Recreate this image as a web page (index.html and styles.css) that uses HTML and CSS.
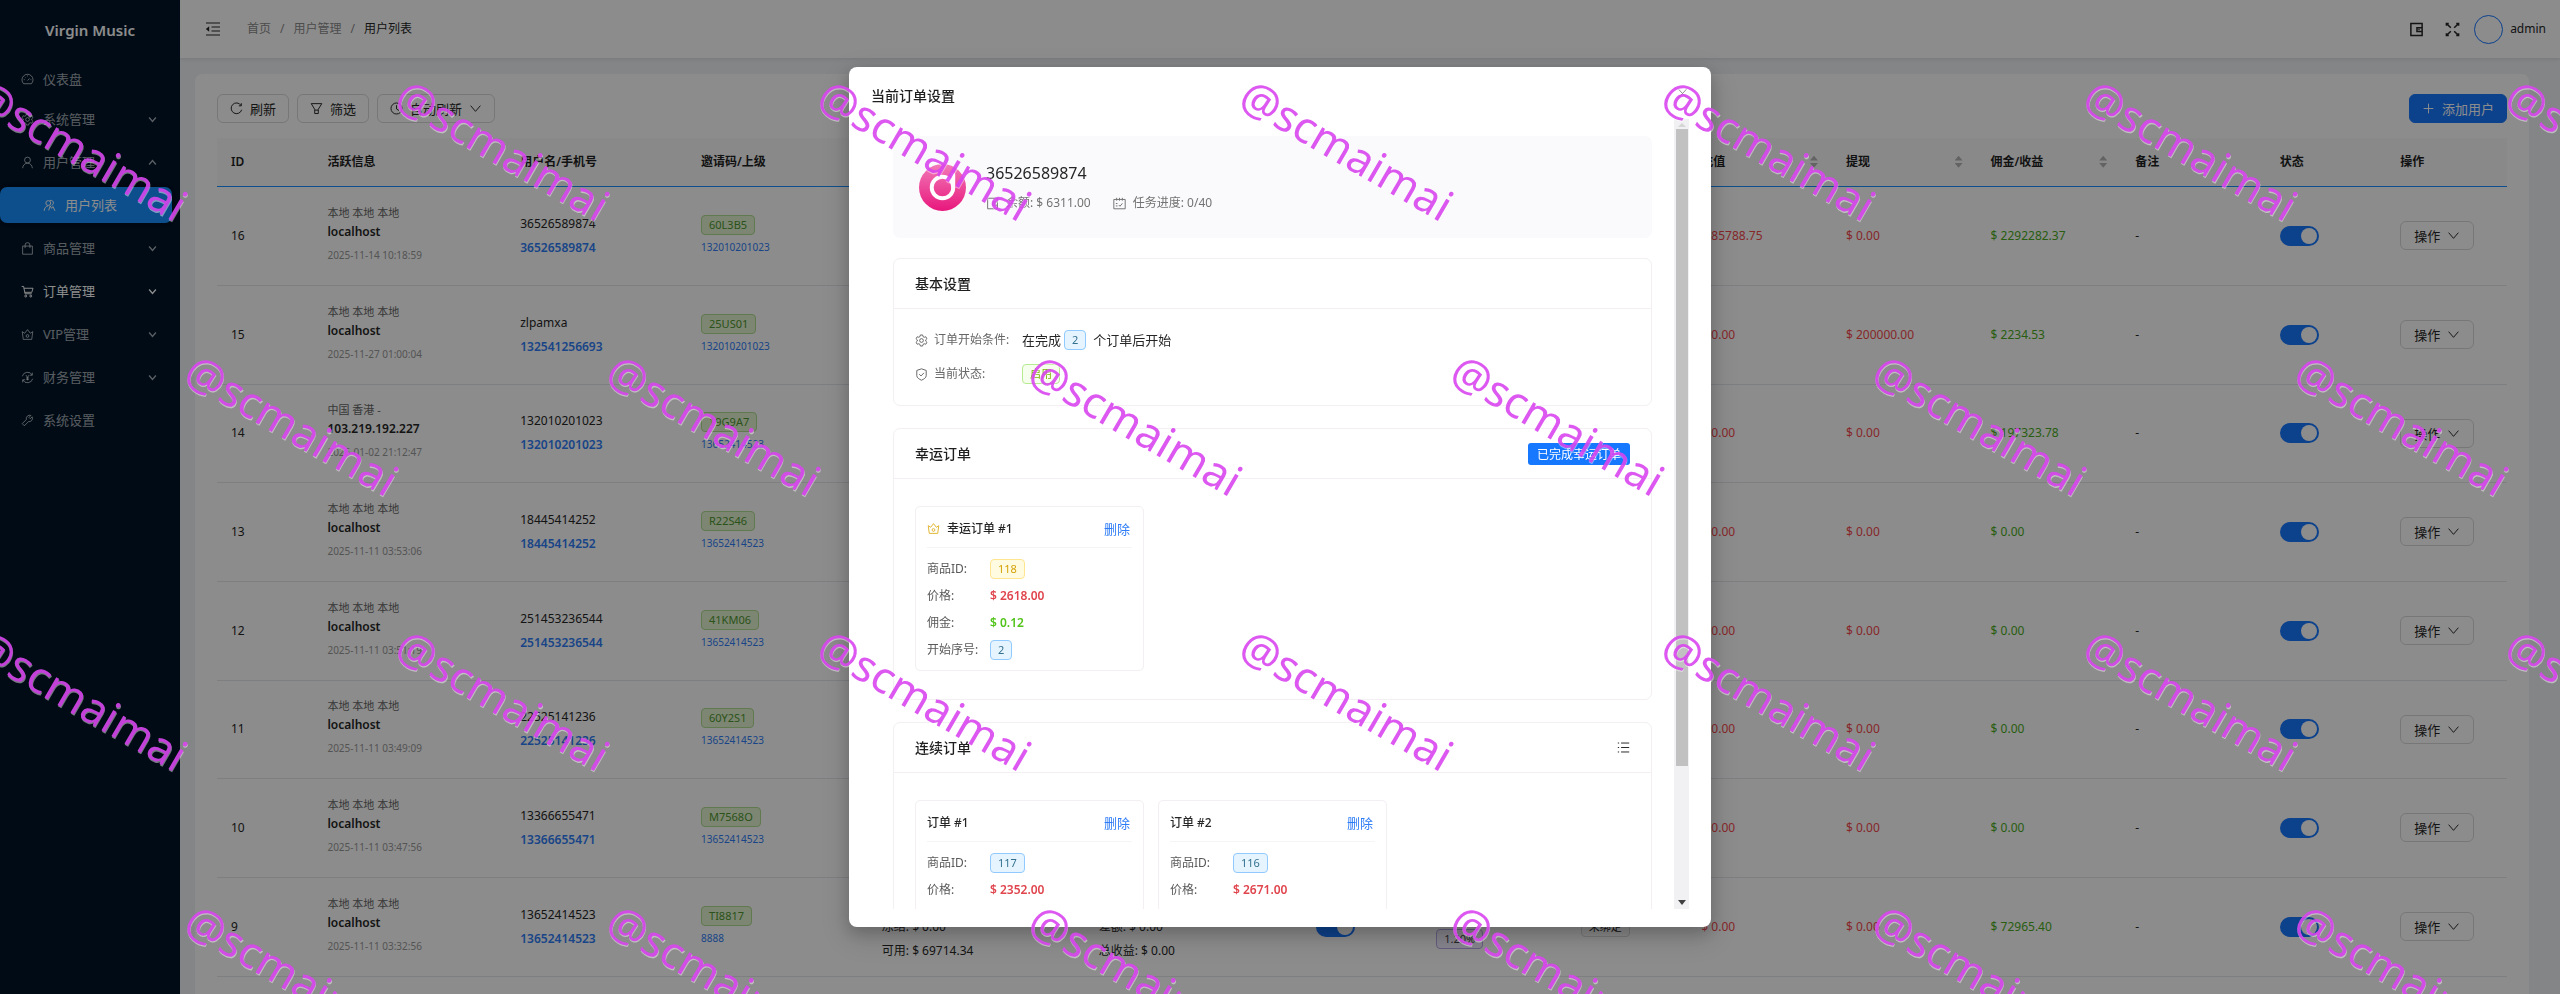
FILE: index.html
```html
<!DOCTYPE html>
<html lang="zh-CN">
<head>
  <meta charset="UTF-8">
  <meta name="viewport" content="width=device-width, initial-scale=1.0">
  <title>用户列表 | Virgin Music</title>
  <link rel="stylesheet" href="styles.css">
</head>
<body>

  <!-- shared icons -->
  <svg class="sprite" aria-hidden="true">
    <symbol id="i-dash" viewBox="0 0 16 16"><path d="M3.2 13.2a6.8 6.8 0 1 1 9.6 0zM8 9.2l2.6-2.6M8 3v1.2M3.4 8.2h1.2M11.6 8.2h1.2M4.8 5l.8.8"/></symbol>
    <symbol id="i-gear" viewBox="0 0 16 16"><path d="M6.6 1.2h2.8l.5 2 1.4.8 2-.6 1.4 2.4-1.5 1.4v1.6l1.5 1.4-1.4 2.4-2-.6-1.4.8-.5 2H6.6l-.5-2-1.4-.8-2 .6-1.4-2.4 1.5-1.4V7.2L1.3 5.800l1.400-2.400 2 .6 1.400-.8z"/><circle cx="8" cy="8" r="2.300"/></symbol>
    <symbol id="i-user" viewBox="0 0 16 16"><circle cx="8" cy="5" r="3.600"/><path d="M2 15c.3-3.600 2.800-6.200 6-6.200s5.700 2.600 6 6.200"/></symbol>
    <symbol id="i-users" viewBox="0 0 16 16"><circle cx="6.500" cy="5" r="3"/><path d="M1.500 14.500c.2-3.500 2-5.500 4.500-5.800M8.500 1.800c2.500-.6 4.500 1 4.300 3.200-.1 1.500-1 2.500-2.300 2.900M7 14l1.800-5.500 1.800 3 1.600-2.200 2.500 5.200"/></symbol>
    <symbol id="i-bag" viewBox="0 0 16 16"><path d="M2 5h12v10H2zM5 7.500V3.800a3 3 0 0 1 6 0v3.700"/></symbol>
    <symbol id="i-cart" viewBox="0 0 16 16"><path d="M.8 1.800h2.400l1.800 9h8.200M3.600 4h11.200l-1.500 5H4.600"/><circle cx="5.800" cy="13.600" r="1.200"/><circle cx="12" cy="13.600" r="1.200"/></symbol>
    <symbol id="i-crown" viewBox="0 0 16 16"><path d="M1.500 4.500l3 2L8 2l3.500 4.500 3-2-1.300 9.500H2.800z"/><circle cx="8" cy="9.800" r="1.700"/></symbol>
    <symbol id="i-money" viewBox="0 0 16 16"><path d="M1.600 6.500A6.600 6.600 0 0 1 13.800 5M14.400 9.500A6.600 6.600 0 0 1 2.200 11M13.900 2v3.200h-3M2.100 14v-3.200h3M6 5l2 2.800L10 5M8 7.800V11.500M6.200 8.500h3.600M6.200 10.200h3.600"/></symbol>
    <symbol id="i-tool" viewBox="0 0 16 16"><path d="M13.800 3.500l-2.400 2.300-1.600-1.600L12.200 1.800A4.200 4.200 0 0 0 6.600 6.800L1.500 11.900l2.600 2.600 5.100-5.100a4.200 4.200 0 0 0 4.600-5.900z"/></symbol>
    <symbol id="i-down" viewBox="0 0 16 16"><path d="M2 4.500l6 7 6-7"/></symbol>
    <symbol id="i-fold" viewBox="0 0 16 16"><path d="M1 2h14M6.500 6h8.500M6.500 10h8.500M1 14h14"/><path class="solid" d="M4.200 5.200v5.600L.8 8z"/></symbol>
    <symbol id="i-reload" viewBox="0 0 16 16"><path d="M13.600 4.200A6.600 6.600 0 1 0 14.400 9.500M13.900 1.500v3.200h-3"/></symbol>
    <symbol id="i-filter" viewBox="0 0 16 16"><path d="M1.500 2h13l-4.300 7v5.200H5.800V9zM5.800 10h4.400"/></symbol>
    <symbol id="i-clock" viewBox="0 0 16 16"><circle cx="8" cy="8" r="6.800"/><path d="M8 4v4.500l3 2"/></symbol>
    <symbol id="i-wallet" viewBox="0 0 16 16"><path d="M2 1.500h12v13H2zM14 6H8.500v4H14"/><path class="solid" d="M10 7.300h1.400v1.400H10z"/></symbol>
    <symbol id="i-full" viewBox="0 0 16 16"><path d="M1.500 1.500l4.700 4.700M14.500 1.500L9.800 6.200M1.500 14.500l4.700-4.700M14.500 14.500L9.800 9.800M1.500 4V1.500H4M14.500 4V1.500H12M1.500 12v2.500H4M14.500 12v2.500H12"/></symbol>
    <symbol id="i-plus" viewBox="0 0 16 16"><path d="M8 2v12M2 8h12"/></symbol>
    <symbol id="i-close" viewBox="0 0 16 16"><path d="M2.500 2l11 12M13.500 2l-11 12"/></symbol>
    <symbol id="i-task" viewBox="0 0 16 16"><path d="M1 3h14v11.500H1zM4.500 1v3.500M8 1v3.500M11.500 1v3.500M7 9.800l1.600 1.600 3-3.600M3.500 8h2M3.500 11h2"/></symbol>
    <symbol id="i-safe" viewBox="0 0 16 16"><path d="M8 1l5.800 2v6.500c0 2.500-3 4.300-5.800 5.500-2.800-1.200-5.800-3-5.800-5.500V3zM5.200 7.600l2.200 2.200 3.600-3.800"/></symbol>
    <symbol id="i-list" viewBox="0 0 16 16"><path d="M5 2.500h10M5 8h10M5 13.500h10M1 2.500h1.600M1 8h1.600M1 13.500h1.600"/></symbol>
  </svg>

  <div class="layout">
    <aside class="sider">
      <div class="logo">Virgin Music</div>
      <nav class="menu">
        <a href="#" class="menu-item home"><svg class="icon"><use href="#i-dash"/></svg><span>仪表盘</span></a>
        <a href="#" class="menu-item"><svg class="icon"><use href="#i-gear"/></svg><span>系统管理</span><svg class="arrow"><use href="#i-down"/></svg></a>
        <a href="#" class="menu-item open"><svg class="icon"><use href="#i-user"/></svg><span>用户管理</span><svg class="arrow"><use href="#i-down"/></svg></a>
        <a href="#" class="menu-item sub selected"><svg class="icon"><use href="#i-users"/></svg><span>用户列表</span></a>
        <a href="#" class="menu-item"><svg class="icon"><use href="#i-bag"/></svg><span>商品管理</span><svg class="arrow"><use href="#i-down"/></svg></a>
        <a href="#" class="menu-item hover"><svg class="icon"><use href="#i-cart"/></svg><span>订单管理</span><svg class="arrow"><use href="#i-down"/></svg></a>
        <a href="#" class="menu-item"><svg class="icon"><use href="#i-crown"/></svg><span>VIP管理</span><svg class="arrow"><use href="#i-down"/></svg></a>
        <a href="#" class="menu-item"><svg class="icon"><use href="#i-money"/></svg><span>财务管理</span><svg class="arrow"><use href="#i-down"/></svg></a>
        <a href="#" class="menu-item"><svg class="icon"><use href="#i-tool"/></svg><span>系统设置</span></a>
      </nav>
    </aside>

    <div class="main">
      <header class="header">
        <button type="button" class="icon-btn fold" aria-label="收起菜单"><svg class="icon"><use href="#i-fold"/></svg></button>
        <nav class="breadcrumb">
          <a href="#">首页</a><i>/</i><a href="#">用户管理</a><i>/</i><span>用户列表</span>
        </nav>
        <div class="header-right">
          <button type="button" class="icon-btn" aria-label="钱包"><svg class="icon"><use href="#i-wallet"/></svg></button>
          <button type="button" class="icon-btn" aria-label="全屏"><svg class="icon"><use href="#i-full"/></svg></button>
          <div class="account"><span class="avatar"></span><span>admin</span></div>
        </div>
      </header>

      <main class="card">
        <div class="toolbar">
          <button type="button" class="btn"><svg class="icon"><use href="#i-reload"/></svg>刷新</button>
          <button type="button" class="btn"><svg class="icon"><use href="#i-filter"/></svg>筛选</button>
          <button type="button" class="btn"><svg class="icon"><use href="#i-clock"/></svg>自动刷新<svg class="icon caret"><use href="#i-down"/></svg></button>
          <button type="button" class="btn primary"><svg class="icon"><use href="#i-plus"/></svg>添加用户</button>
        </div>

        <table class="table">
          <colgroup>
            <col class="w80"><col class="w160"><col class="w150"><col class="w150"><col class="w180"><col class="w180"><col class="w100"><col class="w120">
            <col class="w100"><col class="w120"><col class="w120"><col class="w120"><col class="w120"><col class="w100"><col class="w100">
          </colgroup>
          <thead>
            <tr>
              <th>ID</th><th>活跃信息</th><th>用户名/手机号</th><th>邀请码/上级</th><th></th><th></th><th></th><th></th><th></th>
              <th><div class="sort">充值</div></th><th><div class="sort">提现</div></th><th><div class="sort">佣金/收益</div></th><th>备注</th><th>状态</th><th>操作</th>
            </tr>
          </thead>
          <tbody>
            <tr>
              <td>16</td>
              <td><div class="place">本地 本地 本地</div><div class="host">localhost</div><div class="time">2025-11-14 10:18:59</div></td>
              <td><div class="name">36526589874</div><a href="#" class="phone">36526589874</a></td>
              <td><span class="tag green">60L3B5</span><a href="#" class="parent">132010201023</a></td>
              <td></td><td></td><td></td><td></td><td></td>
              <td class="red">$ 85788.75</td><td class="red">$ 0.00</td><td class="earn">$ 2292282.37</td><td>-</td>
              <td><input type="checkbox" class="switch" aria-label="状态" checked></td>
              <td><button type="button" class="btn">操作<svg class="icon caret"><use href="#i-down"/></svg></button></td>
            </tr>
            <tr>
              <td>15</td>
              <td><div class="place">本地 本地 本地</div><div class="host">localhost</div><div class="time">2025-11-27 01:00:04</div></td>
              <td><div class="name">zlpamxa</div><a href="#" class="phone">132541256693</a></td>
              <td><span class="tag green">25US01</span><a href="#" class="parent">132010201023</a></td>
              <td></td><td></td><td></td><td></td><td></td>
              <td class="red">$ 0.00</td><td class="red">$ 200000.00</td><td class="earn">$ 2234.53</td><td>-</td>
              <td><input type="checkbox" class="switch" aria-label="状态" checked></td>
              <td><button type="button" class="btn">操作<svg class="icon caret"><use href="#i-down"/></svg></button></td>
            </tr>
            <tr>
              <td>14</td>
              <td><div class="place">中国 香港 -</div><div class="host">103.219.192.227</div><div class="time">2026-01-02 21:12:47</div></td>
              <td><div class="name">132010201023</div><a href="#" class="phone">132010201023</a></td>
              <td><span class="tag green">19G9A7</span><a href="#" class="parent">13652414523</a></td>
              <td></td><td></td><td></td><td></td><td></td>
              <td class="red">$ 0.00</td><td class="red">$ 0.00</td><td class="earn">$ 197323.78</td><td>-</td>
              <td><input type="checkbox" class="switch" aria-label="状态" checked></td>
              <td><button type="button" class="btn">操作<svg class="icon caret"><use href="#i-down"/></svg></button></td>
            </tr>
            <tr>
              <td>13</td>
              <td><div class="place">本地 本地 本地</div><div class="host">localhost</div><div class="time">2025-11-11 03:53:06</div></td>
              <td><div class="name">18445414252</div><a href="#" class="phone">18445414252</a></td>
              <td><span class="tag green">R22S46</span><a href="#" class="parent">13652414523</a></td>
              <td></td><td></td><td></td><td></td><td></td>
              <td class="red">$ 0.00</td><td class="red">$ 0.00</td><td class="earn">$ 0.00</td><td>-</td>
              <td><input type="checkbox" class="switch" aria-label="状态" checked></td>
              <td><button type="button" class="btn">操作<svg class="icon caret"><use href="#i-down"/></svg></button></td>
            </tr>
            <tr>
              <td>12</td>
              <td><div class="place">本地 本地 本地</div><div class="host">localhost</div><div class="time">2025-11-11 03:51:19</div></td>
              <td><div class="name">251453236544</div><a href="#" class="phone">251453236544</a></td>
              <td><span class="tag green">41KM06</span><a href="#" class="parent">13652414523</a></td>
              <td></td><td></td><td></td><td></td><td></td>
              <td class="red">$ 0.00</td><td class="red">$ 0.00</td><td class="earn">$ 0.00</td><td>-</td>
              <td><input type="checkbox" class="switch" aria-label="状态" checked></td>
              <td><button type="button" class="btn">操作<svg class="icon caret"><use href="#i-down"/></svg></button></td>
            </tr>
            <tr>
              <td>11</td>
              <td><div class="place">本地 本地 本地</div><div class="host">localhost</div><div class="time">2025-11-11 03:49:09</div></td>
              <td><div class="name">22525141236</div><a href="#" class="phone">22525141236</a></td>
              <td><span class="tag green">60Y2S1</span><a href="#" class="parent">13652414523</a></td>
              <td></td><td></td><td></td><td></td><td></td>
              <td class="red">$ 0.00</td><td class="red">$ 0.00</td><td class="earn">$ 0.00</td><td>-</td>
              <td><input type="checkbox" class="switch" aria-label="状态" checked></td>
              <td><button type="button" class="btn">操作<svg class="icon caret"><use href="#i-down"/></svg></button></td>
            </tr>
            <tr>
              <td>10</td>
              <td><div class="place">本地 本地 本地</div><div class="host">localhost</div><div class="time">2025-11-11 03:47:56</div></td>
              <td><div class="name">13366655471</div><a href="#" class="phone">13366655471</a></td>
              <td><span class="tag green">M7568O</span><a href="#" class="parent">13652414523</a></td>
              <td></td><td></td><td></td><td></td><td></td>
              <td class="red">$ 0.00</td><td class="red">$ 0.00</td><td class="earn">$ 0.00</td><td>-</td>
              <td><input type="checkbox" class="switch" aria-label="状态" checked></td>
              <td><button type="button" class="btn">操作<svg class="icon caret"><use href="#i-down"/></svg></button></td>
            </tr>
            <tr>
              <td>9</td>
              <td><div class="place">本地 本地 本地</div><div class="host">localhost</div><div class="time">2025-11-11 03:32:56</div></td>
              <td><div class="name">13652414523</div><a href="#" class="phone">13652414523</a></td>
              <td><span class="tag green">TI8817</span><a href="#" class="parent">8888</a></td>
              <td><div class="lines"><div>冻结: $ 0.00</div><div>可用: $ 69714.34</div></div></td>
              <td><div class="lines"><div>差额: $ 0.00</div><div>总收益: $ 0.00</div></div></td>
              <td><input type="checkbox" class="switch" aria-label="任务" checked></td>
              <td><div class="lines"><span class="tag purple">1.20%</span></div></td>
              <td><span class="tag">未绑定</span></td>
              <td class="red">$ 0.00</td><td class="red">$ 0.00</td><td class="earn">$ 72965.40</td><td>-</td>
              <td><input type="checkbox" class="switch" aria-label="状态" checked></td>
              <td><button type="button" class="btn">操作<svg class="icon caret"><use href="#i-down"/></svg></button></td>
            </tr>
          </tbody>
        </table>
      </main>
    </div>
  </div>

  <div class="mask">
    <div class="modal" role="dialog" aria-modal="true" aria-labelledby="modalTitle">
      <div class="modal-header">
        <h2 id="modalTitle">当前订单设置</h2>
        <button type="button" class="icon-btn close" aria-label="关闭"><svg class="icon"><use href="#i-close"/></svg></button>
      </div>
      <div class="modal-scroll">
        <div class="modal-body">
          <section class="profile">
            <svg class="profile-avatar" viewBox="0 0 48 48" aria-hidden="true">
              <defs><linearGradient id="pink" x1="0" y1="0" x2="0" y2="1"><stop offset="0" stop-color="#f27ab8"/><stop offset="1" stop-color="#e8177c"/></linearGradient></defs>
              <circle cx="24" cy="24" r="24" fill="url(#pink)"/>
              <circle cx="24" cy="24" r="11" fill="none" stroke="#fff" stroke-width="4"/>
              <path d="M35 24V11" stroke="#fff" stroke-width="4" stroke-linecap="round"/>
            </svg>
            <div>
              <div class="profile-name">36526589874</div>
              <div class="profile-meta">
                <span><svg class="icon"><use href="#i-wallet"/></svg>余额: $ 6311.00</span>
                <span><svg class="icon"><use href="#i-task"/></svg>任务进度: 0/40</span>
              </div>
            </div>
          </section>

          <section class="panel">
            <div class="panel-head"><h3>基本设置</h3></div>
            <div class="panel-info">
              <div class="info-row"><span class="info-label"><svg class="icon"><use href="#i-gear"/></svg>订单开始条件:</span><span>在完成</span><span class="tag blue">2</span><span>个订单后开始</span></div>
              <div class="info-row"><span class="info-label"><svg class="icon"><use href="#i-safe"/></svg>当前状态:</span><span class="tag lime">启用</span></div>
            </div>
          </section>

          <section class="panel">
            <div class="panel-head"><h3>幸运订单</h3><button type="button" class="btn-done">已完成幸运订单</button></div>
            <div class="orders">
              <div class="order">
                <div class="order-head"><svg class="icon gold"><use href="#i-crown"/></svg><h4>幸运订单 #1</h4><a href="#">删除</a></div>
                <dl>
                  <dt>商品ID:</dt><dd><span class="tag gold">118</span></dd>
                  <dt>价格:</dt><dd class="price">$ 2618.00</dd>
                  <dt>佣金:</dt><dd class="profit">$ 0.12</dd>
                  <dt>开始序号:</dt><dd><span class="tag blue">2</span></dd>
                </dl>
              </div>
            </div>
          </section>

          <section class="panel">
            <div class="panel-head"><h3>连续订单</h3><button type="button" class="icon-btn" aria-label="列表"><svg class="icon"><use href="#i-list"/></svg></button></div>
            <div class="orders">
              <div class="order">
                <div class="order-head"><h4>订单 #1</h4><a href="#">删除</a></div>
                <dl>
                  <dt>商品ID:</dt><dd><span class="tag blue">117</span></dd>
                  <dt>价格:</dt><dd class="price">$ 2352.00</dd>
                </dl>
              </div>
              <div class="order">
                <div class="order-head"><h4>订单 #2</h4><a href="#">删除</a></div>
                <dl>
                  <dt>商品ID:</dt><dd><span class="tag blue">116</span></dd>
                  <dt>价格:</dt><dd class="price">$ 2671.00</dd>
                </dl>
              </div>
            </div>
          </section>
        </div>
        <div class="scrollbar" aria-hidden="true"><i class="up"></i><div class="thumb"></div><i class="down"></i></div>
      </div>
    </div>
  </div>

  <div class="watermark">
    <div class="watermark-row"><span>@scmaimai</span><span>@scmaimai</span><span>@scmaimai</span><span>@scmaimai</span><span>@scmaimai</span><span>@scmaimai</span><span>@scmaimai</span></div>
    <div class="watermark-row shift"><span>@scmaimai</span><span>@scmaimai</span><span>@scmaimai</span><span>@scmaimai</span><span>@scmaimai</span><span>@scmaimai</span></div>
    <div class="watermark-row"><span>@scmaimai</span><span>@scmaimai</span><span>@scmaimai</span><span>@scmaimai</span><span>@scmaimai</span><span>@scmaimai</span><span>@scmaimai</span></div>
    <div class="watermark-row shift"><span>@scmaimai</span><span>@scmaimai</span><span>@scmaimai</span><span>@scmaimai</span><span>@scmaimai</span><span>@scmaimai</span></div>
  </div>

</body>
</html>
```
FILE: styles.css
```css
* {
  box-sizing: border-box;
}
body {
  margin: 0;
  height: 100vh;
  overflow: hidden;
  font-family: "Noto Sans", "Noto Sans CJK SC", sans-serif;
  font-size: 13px;
  line-height: 20px;
  color: #262626;
  background: #f0f2f5;
}
a {
  color: #2f7df6;
  text-decoration: none;
}
button {
  font-family: inherit;
  font-size: 13px;
  cursor: pointer;
}
h2, h3, h4, dl, dd {
  margin: 0;
}
.sprite {
  display: none;
}
.icon {
  width: 13px;
  height: 13px;
  flex: none;
  fill: none;
  stroke: currentColor;
  stroke-width: 1.2;
}
.solid {
  fill: currentColor;
  stroke: none;
}
.icon-btn {
  display: flex;
  align-items: center;
  padding: 0;
  border: 0;
  background: none;
  color: inherit;
}

/* layout */
.layout {
  display: flex;
  height: 100vh;
  overflow: hidden;
}
.sider {
  width: 180px;
  flex: none;
  background: #001529;
}
.logo {
  height: 61px;
  line-height: 60px;
  text-align: center;
  font-size: 15px;
  font-weight: 600;
  color: #fff;
}
.menu-item {
  display: flex;
  align-items: center;
  gap: 9px;
  height: 36px;
  margin: 0 8px 7px 0;
  padding: 0 15px 0 21px;
  border-radius: 7px;
  color: rgba(255, 255, 255, 0.65);
}
.menu-item.home {
  margin-bottom: 4px;
}
.menu-item.sub {
  padding-left: 43px;
}
.menu-item.selected {
  background: #1890ff;
  color: #fff;
  box-shadow: 0 0 8px rgba(0, 0, 0, 0.5);
}
.menu-item.hover {
  color: #fff;
}
.arrow {
  width: 9px;
  height: 9px;
  margin-left: auto;
  fill: none;
  stroke: currentColor;
  stroke-width: 2.4;
}
.menu-item.open .arrow {
  transform: rotate(180deg);
}
.main {
  display: flex;
  flex-direction: column;
  flex: 1;
  min-width: 0;
}
.header {
  display: flex;
  flex: none;
  align-items: center;
  height: 58px;
  padding: 0 14px 0 25px;
  background: #fff;
  box-shadow: 0 1px 4px rgba(0, 21, 41, 0.1);
}
.fold .icon {
  width: 16px;
  height: 16px;
}
.breadcrumb {
  display: flex;
  gap: 9px;
  margin-left: 26px;
  font-size: 12px;
}
.breadcrumb a,
.breadcrumb i {
  font-style: normal;
  color: #8c8c8c;
}
.header-right {
  display: flex;
  align-items: center;
  gap: 21px;
  margin-left: auto;
}
.header-right .icon {
  width: 15px;
  height: 15px;
  stroke-width: 1.6;
}
.account {
  display: flex;
  align-items: center;
  gap: 7px;
  margin-left: -7px;
  font-size: 12px;
}
.avatar {
  width: 29px;
  height: 29px;
  border: 1px solid #1677ff;
  border-radius: 50%;
}
.card {
  flex: 1;
  min-height: 0;
  margin: 16px 31px 0 15px;
  padding: 20px 22px 0;
  background: #fff;
  border-radius: 7px 7px 0 0;
}
.toolbar {
  display: flex;
  gap: 8px;
  margin-bottom: 15px;
}
.btn {
  display: inline-flex;
  align-items: center;
  gap: 7px;
  height: 29px;
  padding: 0 12px;
  border: 1px solid #d9d9d9;
  border-radius: 6px;
  background: #fff;
  color: #262626;
}
.btn.primary {
  margin-left: auto;
  border-color: #1677ff;
  background: #1677ff;
  color: #fff;
}

/* user table */
.table {
  width: 100%;
  table-layout: fixed;
  border-collapse: collapse;
  font-size: 12px;
}
.w80 { width: 80px; }
.w100 { width: 100px; }
.w120 { width: 120px; }
.w150 { width: 150px; }
.w160 { width: 160px; }
.w180 { width: 180px; }
.table th,
.table td {
  padding: 0 14px;
  text-align: left;
  vertical-align: middle;
}
.table th {
  height: 48px;
  font-size: 12px;
  font-weight: 600;
  color: #1f1f1f;
  background: #fafafa;
  border-bottom: 1px solid #1890ff;
}
.table td {
  height: 99px;
  border-bottom: 1px solid #e4e7ec;
}
.table tr:nth-child(3n) td {
  height: 98px;
}
.table td .btn {
  padding: 0 13px;
}
.sort {
  display: flex;
  align-items: center;
  justify-content: space-between;
}
.sort::after {
  content: "";
  width: 8px;
  height: 12px;
  background: #b5b5b5;
  clip-path: polygon(50% 0, 100% 40%, 0 40%, 0 60%, 100% 60%, 50% 100%, 0 60%, 0 40%);
}
.place {
  font-size: 11px;
  line-height: 18px;
  color: #666;
}
.host {
  font-weight: 600;
}
.time {
  margin-top: 3px;
  padding-bottom: 3px;
  font-size: 10px;
  color: #999;
}
.name,
.phone {
  display: block;
  line-height: 24px;
}
.phone {
  font-weight: 600;
}
.parent {
  display: block;
  margin-top: 2px;
  font-size: 10px;
}
.lines {
  padding-top: 24px;
  line-height: 24px;
}
.red {
  color: #f5484d;
}
.earn {
  color: #4bab22;
}
.tag {
  display: inline-block;
  height: 20px;
  line-height: 18px;
  padding: 0 7px;
  border: 1px solid #d9d9d9;
  border-radius: 4px;
  background: #fafafa;
  font-size: 11px;
}
.tag.green {
  display: block;
  width: fit-content;
  color: #4f9630;
  background: #e3f5cf;
  border-color: #b0dc90;
}
.tag.lime {
  color: #7cb305;
  background: #f6ffed;
  border-color: #b7eb8f;
}
.tag.blue {
  color: #33718f;
  background: #e6f4ff;
  border-color: #91caff;
}
.tag.gold {
  color: #d4a106;
  background: #fffbe0;
  border-color: #ffe58f;
}
.tag.purple {
  color: #444;
  background: #f4f0ff;
  border-color: #b9a8e8;
}
.switch {
  display: block;
  appearance: none;
  width: 39px;
  height: 20px;
  margin: 0;
  border-radius: 10px;
  background: #d9d9d9;
}
.switch::before {
  content: "";
  display: block;
  width: 16px;
  height: 16px;
  margin: 2px;
  border-radius: 50%;
  background: #fff;
}
.switch:checked {
  background: #1677ff;
}
.switch:checked::before {
  margin-left: 21px;
}

/* order settings modal */
.mask {
  position: fixed;
  inset: 0;
  display: flex;
  align-items: center;
  justify-content: center;
  background: rgba(0, 0, 0, 0.45);
}
.modal {
  display: flex;
  flex-direction: column;
  width: 862px;
  max-width: 90%;
  height: 86.5vh;
  padding: 18px 22px;
  border-radius: 8px;
  background: #fff;
  box-shadow: 0 6px 16px rgba(0, 0, 0, 0.2), 0 9px 28px 8px rgba(0, 0, 0, 0.1);
}
.modal-header {
  display: flex;
  align-items: flex-start;
  justify-content: space-between;
  height: 34px;
}
.modal-header h2,
.panel-head h3 {
  font-size: 14px;
  font-weight: 500;
  line-height: 22px;
  color: #1f1f1f;
}
.close {
  color: #8c8c8c;
  padding-top: 2px;
}
.modal-scroll {
  display: flex;
  flex: 1;
  min-height: 0;
}
.modal-body {
  flex: 1;
  padding: 17px 22px;
  overflow: hidden;
}
.scrollbar {
  display: flex;
  flex-direction: column;
  align-items: center;
  width: 15px;
  padding-bottom: 4px;
  background: #f1f1f3;
}
.scrollbar .thumb {
  width: 12px;
  height: 81%;
  background: #c1c1c1;
}
.scrollbar i {
  border: 4px solid transparent;
}
.scrollbar .up {
  margin-bottom: 2px;
  border-bottom-color: #d5d5d5;
}
.scrollbar .down {
  margin-top: auto;
  border-width: 5px 4px 0;
  border-top-color: #404040;
}
.profile {
  display: flex;
  align-items: center;
  gap: 20px;
  height: 102px;
  margin-bottom: 20px;
  padding: 0 26px;
  border-radius: 7px;
  background: #fafafc;
}
.profile-avatar {
  width: 47px;
  height: 47px;
}
.profile-name {
  font-size: 16px;
  line-height: 24px;
}
.profile-meta {
  display: flex;
  gap: 22px;
  margin-top: 8px;
  color: #737373;
}
.profile-meta span {
  display: flex;
  align-items: center;
  gap: 7px;
  font-size: 12px;
}
.panel {
  margin-bottom: 22px;
  border: 1px solid #f3eff3;
  border-radius: 7px;
}
.panel-head {
  display: flex;
  align-items: center;
  justify-content: space-between;
  height: 50px;
  padding: 0 21px;
  border-bottom: 1px solid #f3eff3;
}
.btn-done {
  height: 22px;
  padding: 0 9px;
  border: 0;
  border-radius: 3px;
  background: #1677ff;
  color: #fff;
  font-size: 12px;
}
.panel-info {
  display: flex;
  flex-direction: column;
  gap: 14px;
  padding: 21px;
}
.info-row {
  display: flex;
  align-items: center;
  height: 20px;
}
.info-row .blue {
  margin: 0 7px 0 3px;
}
.info-label {
  display: flex;
  align-items: center;
  gap: 6px;
  width: 107px;
  font-size: 12px;
  color: #666;
}
.orders {
  display: flex;
  flex-wrap: wrap;
  gap: 14px;
  padding: 27px 21px 28px;
}
.order {
  width: 229px;
  min-height: 164px;
  padding: 3px 11px 7px;
  border: 1px solid #f3eff3;
  border-radius: 5px;
}
.order-head {
  display: flex;
  align-items: center;
  gap: 7px;
  height: 38px;
  margin-bottom: 7px;
  border-bottom: 1px solid #f5f5f5;
}
.order-head h4 {
  font-size: 12px;
  font-weight: 500;
}
.order-head a {
  margin-left: auto;
  padding-right: 2px;
}
.icon.gold {
  color: #e0b530;
}
.order dl {
  display: grid;
  grid-template-columns: 63px 1fr;
  grid-auto-rows: 27px;
  align-items: center;
  font-size: 12px;
  color: #595959;
}
.price {
  color: #e0444c;
  font-weight: 600;
}
.profit {
  color: #52c41a;
  font-weight: 600;
}

/* watermark */
.watermark {
  position: fixed;
  inset: 0;
  padding-top: 12px;
  overflow: hidden;
  pointer-events: none;
}
.watermark-row {
  display: flex;
  height: 275px;
  margin-left: -130px;
}
.watermark-row.shift {
  margin-left: 81px;
}
.watermark-row span {
  flex: none;
  width: 422px;
  line-height: 275px;
  text-align: center;
  font-size: 44px;
  color: #d946ef;
  opacity: 0.9;
  text-shadow: 1px 1px 0 rgba(255, 255, 255, 0.5);
  transform: rotate(30deg);
}
```
